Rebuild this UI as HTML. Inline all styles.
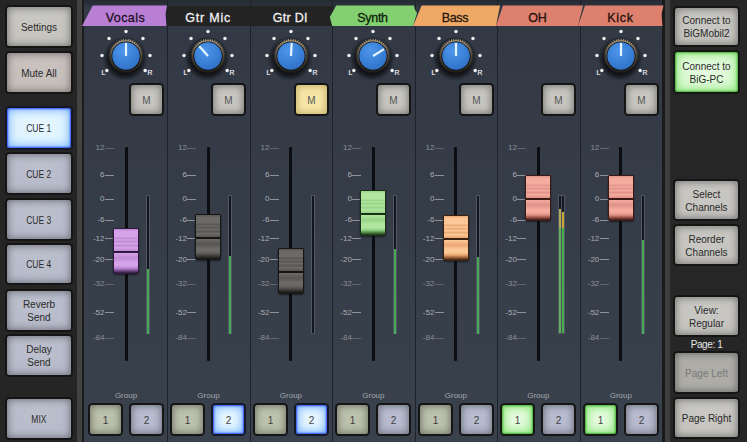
<!DOCTYPE html><html><head><meta charset="utf-8"><style>
*{margin:0;padding:0;box-sizing:border-box}
html,body{width:747px;height:442px;overflow:hidden;background:#252525;font-family:"Liberation Sans",sans-serif}
.a{position:absolute}
.btn{position:absolute;border-radius:2.5px;box-shadow:0 0 0 2px #151515, inset 0 0 7px 1px rgba(0,0,0,.38);display:flex;align-items:center;justify-content:center;text-align:center;color:#2a2a2a;font-size:10px;line-height:13px;padding-top:1px}
.gray{background:radial-gradient(ellipse 75% 65% at 50% 40%,rgba(255,255,255,.12),rgba(255,255,255,0)) #c2c1bc}
.pink{background:radial-gradient(ellipse 75% 65% at 50% 40%,rgba(255,255,255,.1),rgba(255,255,255,0)) #c3bcb9}
.blue{background:radial-gradient(ellipse 75% 65% at 50% 40%,rgba(255,255,255,.12),rgba(255,255,255,0)) #b4b8c7}
.cue{background:radial-gradient(ellipse 80% 70% at 50% 45%,rgba(255,255,255,.5),rgba(255,255,255,0)) #d4f0ff;box-shadow:0 0 0 2px #141828, inset 0 0 2px 1px rgba(40,70,240,.95), inset 0 0 8px 2px rgba(80,150,255,.7)}
.grn{background:radial-gradient(ellipse 80% 70% at 50% 45%,rgba(255,255,255,.45),rgba(255,255,255,0)) #d2f8c8;box-shadow:0 0 0 2px #151815, inset 0 0 2px 1px rgba(60,170,40,.9), inset 0 0 8px 2px rgba(110,220,90,.75)}
.dis{background:#adaca7;color:#7b7b78}
.mbtn{background:radial-gradient(ellipse 75% 65% at 50% 40%,rgba(255,255,255,.1),rgba(255,255,255,0)) #c2c1bb;color:#555}
.ybtn{background:#f5e6a8;color:#555;box-shadow:0 0 0 2px #151515, inset 0 0 7px 1px rgba(120,90,0,.4)!important}
.g1{background:radial-gradient(ellipse 75% 65% at 50% 40%,rgba(255,255,255,.1),rgba(255,255,255,0)) #b6bca6;color:#3c3c3c}
.g2{background:radial-gradient(ellipse 75% 65% at 50% 40%,rgba(255,255,255,.1),rgba(255,255,255,0)) #b2b6ca;color:#3c3c3c}
.g1s{background:radial-gradient(ellipse 80% 70% at 50% 45%,rgba(255,255,255,.45),rgba(255,255,255,0)) #d2f8c8;color:#444;box-shadow:0 0 0 2px #151815, inset 0 0 2px 1px rgba(60,170,40,.9), inset 0 0 8px 2px rgba(110,220,90,.75)}
.g2s{background:radial-gradient(ellipse 80% 70% at 50% 45%,rgba(255,255,255,.5),rgba(255,255,255,0)) #d4f0ff;color:#444;box-shadow:0 0 0 2px #141828, inset 0 0 2px 1px rgba(40,70,240,.95), inset 0 0 8px 2px rgba(80,150,255,.7)}
.lbl{position:absolute;font-size:8px;color:#a9aeb6;text-align:right;width:20.5px;line-height:8px}
.tick{position:absolute;height:1px;background:#8d939c;width:9px}
.tag{position:absolute;top:7.5px;height:21px;font-weight:normal;-webkit-text-stroke:.3px currentColor;font-size:12.5px;line-height:21px;text-align:center}
</style></head><body>

<div class="a" style="left:0;top:0;width:76px;height:442px;background:#252525"></div>
<div class="a" style="left:76px;top:0;width:6px;height:442px;background:#42423f;border-left:1px solid #232323"></div>
<div class="a" style="left:82px;top:0;width:2px;height:442px;background:#1a1c20"></div>
<div class="a" style="left:84px;top:0;width:578px;height:442px;background:linear-gradient(#323945,#39414d)"></div>
<div class="a" style="left:662px;top:0;width:3px;height:442px;background:#1a1a1a"></div>
<div class="a" style="left:665px;top:0;width:5px;height:442px;background:#3e3e3c"></div>
<div class="a" style="left:670px;top:0;width:77px;height:442px;background:#262626"></div>
<div class="btn gray" style="left:7px;top:7px;width:64px;height:39px;">Settings</div>
<div class="btn pink" style="left:7px;top:53px;width:64px;height:39px;">Mute All</div>
<div class="btn cue" style="left:7px;top:108px;width:64px;height:40px;"><span style="display:inline-block;transform:scaleX(.85)">CUE 1</span></div>
<div class="btn blue" style="left:7px;top:154px;width:64px;height:39px;"><span style="display:inline-block;transform:scaleX(.85)">CUE 2</span></div>
<div class="btn blue" style="left:7px;top:200px;width:64px;height:39px;"><span style="display:inline-block;transform:scaleX(.85)">CUE 3</span></div>
<div class="btn blue" style="left:7px;top:245px;width:64px;height:38px;"><span style="display:inline-block;transform:scaleX(.85)">CUE 4</span></div>
<div class="btn blue" style="left:7px;top:291px;width:64px;height:39px;">Reverb<br>Send</div>
<div class="btn blue" style="left:7px;top:336px;width:64px;height:39px;">Delay<br>Send</div>
<div class="btn blue" style="left:7px;top:399px;width:64px;height:39px;"><span style="display:inline-block;transform:scaleX(.85)">MIX</span></div>
<div class="btn gray" style="left:675px;top:8px;width:63px;height:37px;">Connect to<br>BiGMobil2</div>
<div class="btn grn" style="left:675px;top:52px;width:63px;height:40px;">Connect to<br>BiG-PC</div>
<div class="btn gray" style="left:675px;top:181px;width:63px;height:38px;">Select<br>Channels</div>
<div class="btn gray" style="left:675px;top:226px;width:63px;height:38px;">Reorder<br>Channels</div>
<div class="btn gray" style="left:675px;top:297px;width:63px;height:38px;">View:<br>Regular</div>
<div class="a" style="left:668px;top:337.5px;width:77px;text-align:center;color:#e6e6e6;font-size:10px;letter-spacing:-.4px;line-height:13px">Page: 1</div>
<div class="btn dis" style="left:675px;top:353px;width:63px;height:39px;">Page Left</div>
<div class="btn gray" style="left:675px;top:399px;width:63px;height:38px;">Page Right</div>
<div class="a" style="left:84px;top:0;width:578px;height:6px;background:linear-gradient(#262b33,#2c323c)"></div>
<div class="a" style="left:166px;top:5.5px;width:168px;height:20.5px;background:#232323"></div>
<div class="a" style="left:167px;top:0;width:1px;height:442px;background:#1e232b"></div>
<div class="a" style="left:250px;top:0;width:1px;height:442px;background:#1e232b"></div>
<div class="a" style="left:332px;top:0;width:1px;height:442px;background:#1e232b"></div>
<div class="a" style="left:415px;top:0;width:1px;height:442px;background:#1e232b"></div>
<div class="a" style="left:497px;top:0;width:1px;height:442px;background:#1e232b"></div>
<div class="a" style="left:580px;top:0;width:1px;height:442px;background:#1e232b"></div>
<svg class="a" style="left:0;top:0" width="747" height="30"><polygon points="82,26 92.7,5.5 167,5.5 165.5,14 166.5,26" fill="#b97fd5"/></svg>
<div class="tag" style="left:84.0px;width:82.47px;color:#1c1024;letter-spacing:0.4px;text-indent:0.4px">Vocals</div>
<svg class="a" style="left:96.0px;top:25.5px" width="60" height="60" viewBox="-30 -30 60 60"><defs><radialGradient id="kb0" cx="40%" cy="30%" r="75%"><stop offset="0" stop-color="#4e96ea"/><stop offset=".55" stop-color="#3b82d9"/><stop offset="1" stop-color="#3070c4"/></radialGradient><radialGradient id="ks0"><stop offset=".7" stop-color="#000" stop-opacity=".7"/><stop offset="1" stop-color="#000" stop-opacity="0"/></radialGradient><linearGradient id="kt0" x1="0" y1="0" x2="0" y2="1"><stop offset="0" stop-color="#b0a088"/><stop offset=".5" stop-color="#524a40"/><stop offset="1" stop-color="#1c1c1c"/></linearGradient></defs><circle r="22.5" cx="-0.8" cy="2.5" fill="url(#ks0)"/><circle r="16.2" fill="#1a1816"/><polygon points="0.00,-17.60 1.10,-15.36 2.50,-17.42 3.27,-15.05 4.96,-16.89 5.38,-14.43 7.31,-16.01 7.38,-13.52 9.52,-14.81 9.23,-12.33 11.53,-13.30 10.89,-10.89 13.30,-11.53 12.33,-9.23 14.81,-9.52 13.52,-7.38 16.01,-7.31 14.43,-5.38 16.89,-4.96 15.05,-3.27 17.42,-2.50 15.36,-1.10 17.60,-0.00 15.36,1.10 17.42,2.50 15.05,3.27 16.89,4.96 14.43,5.38 16.01,7.31 13.52,7.38 14.81,9.52 12.33,9.23 13.30,11.53 10.89,10.89 11.53,13.30 9.23,12.33 9.52,14.81 7.38,13.52 7.31,16.01 5.38,14.43 4.96,16.89 3.27,15.05 2.50,17.42 1.10,15.36 0.00,17.60 -1.10,15.36 -2.50,17.42 -3.27,15.05 -4.96,16.89 -5.38,14.43 -7.31,16.01 -7.38,13.52 -9.52,14.81 -9.23,12.33 -11.53,13.30 -10.89,10.89 -13.30,11.53 -12.33,9.23 -14.81,9.52 -13.52,7.38 -16.01,7.31 -14.43,5.38 -16.89,4.96 -15.05,3.27 -17.42,2.50 -15.36,1.10 -17.60,0.00 -15.36,-1.10 -17.42,-2.50 -15.05,-3.27 -16.89,-4.96 -14.43,-5.38 -16.01,-7.31 -13.52,-7.38 -14.81,-9.52 -12.33,-9.23 -13.30,-11.53 -10.89,-10.89 -11.53,-13.30 -9.23,-12.33 -9.52,-14.81 -7.38,-13.52 -7.31,-16.01 -5.38,-14.43 -4.96,-16.89 -3.27,-15.05 -2.50,-17.42 -1.10,-15.36" fill="url(#kt0)"/><circle r="14.5" fill="#0e0d0c"/><circle r="13.7" fill="url(#kb0)"/><line x1="0" y1="0" x2="0.00" y2="-13.00" stroke="#e4f4ff" stroke-width="2.2" stroke-linecap="butt"/><circle cx="-19.15" cy="14.46" r="1.7" fill="#f2f2f2"/><circle cx="-24.00" cy="-0.50" r="1.7" fill="#f2f2f2"/><circle cx="-16.97" cy="-17.47" r="1.7" fill="#f2f2f2"/><circle cx="0.00" cy="-24.50" r="1.7" fill="#f2f2f2"/><circle cx="16.97" cy="-17.47" r="1.7" fill="#f2f2f2"/><circle cx="24.00" cy="-0.50" r="1.7" fill="#f2f2f2"/><circle cx="19.15" cy="14.46" r="1.7" fill="#f2f2f2"/><text x="-24.5" y="18.5" font-size="6.8" fill="#f0f0f0" stroke="#f0f0f0" stroke-width=".2" font-family="Liberation Sans">L</text><text x="21.5" y="18.5" font-size="6.8" fill="#f0f0f0" stroke="#f0f0f0" stroke-width=".2" font-family="Liberation Sans">R</text></svg>
<div class="btn mbtn" style="left:131px;top:85px;width:31px;height:29px;">M</div>
<div class="lbl" style="left:84.0px;top:144px;color:#8a9098">12</div>
<div class="tick" style="left:105.0px;top:147.5px;background:#5f656e"></div>
<div class="lbl" style="left:84.0px;top:171px;">6</div>
<div class="tick" style="left:105.0px;top:174.5px;"></div>
<div class="lbl" style="left:84.0px;top:195px;">0</div>
<div class="tick" style="left:105.0px;top:198.5px;"></div>
<div class="lbl" style="left:84.0px;top:216px;">-6</div>
<div class="tick" style="left:105.0px;top:219.5px;"></div>
<div class="lbl" style="left:84.0px;top:234.5px;">-12</div>
<div class="tick" style="left:105.0px;top:238.0px;"></div>
<div class="lbl" style="left:84.0px;top:255.5px;">-20</div>
<div class="tick" style="left:105.0px;top:259.0px;"></div>
<div class="lbl" style="left:84.0px;top:280px;color:#8a9098">-32</div>
<div class="tick" style="left:105.0px;top:283.5px;background:#5f656e"></div>
<div class="lbl" style="left:84.0px;top:308.5px;">-52</div>
<div class="tick" style="left:105.0px;top:312.0px;"></div>
<div class="lbl" style="left:84.0px;top:334px;color:#8a9098">-84</div>
<div class="tick" style="left:105.0px;top:337.5px;background:#5f656e"></div>
<div class="a" style="left:124.5px;top:147px;width:3px;height:214px;background:#0c0d10;border-radius:1px"></div>
<div class="a" style="left:146.0px;top:195px;width:4px;height:139px;background:#12161e;border:1px solid #505765"></div>
<div class="a" style="left:147.0px;top:269px;width:2px;height:65px;background:#48a854"></div>
<div class="a" style="left:113.0px;top:228px;width:26px;height:46px;border-radius:1.5px 1.5px 3px 3px;background:#2e1a40;box-shadow:0 1px 2px rgba(0,0,0,.5)"></div>
<div class="a" style="left:114.0px;top:229px;width:24px;height:22px;background:linear-gradient(#be8ad4 0%,#d6a2e8 12%,#d6a2e8 36%,#be8ad4 42%,#d6a2e8 50%,#be8ad4 58%,#d6a2e8 66%,#be8ad4 76%,#d6a2e8 84%,#be8ad4 100%)"></div>
<div class="a" style="left:114.0px;top:253px;width:24px;height:17px;background:linear-gradient(#d6a2e8 0%,#be8ad4 30%,#d6a2e8 55%,#d6a2e8 72%,#be8ad4 88%,#8a5ca0 100%)"></div>
<div class="a" style="left:114.0px;top:270px;width:24px;height:3px;border-radius:0 0 2px 2px;background:linear-gradient(#8a5ca0,#2e1a40)"></div>
<div class="a" style="left:84.0px;top:391px;width:84px;text-align:center;font-size:8px;color:#a3a7ae;line-height:9px">Group</div>
<div class="btn g1" style="left:90px;top:405px;width:31px;height:29px;font-size:10px;">1</div>
<div class="btn g2" style="left:131px;top:405px;width:31px;height:29px;font-size:10px;">2</div>
<div class="tag" style="left:166.47px;width:82.47px;color:#f0f0f0;letter-spacing:0.8px;text-indent:0.8px">Gtr Mic</div>
<svg class="a" style="left:178.47px;top:25.5px" width="60" height="60" viewBox="-30 -30 60 60"><defs><radialGradient id="kb1" cx="40%" cy="30%" r="75%"><stop offset="0" stop-color="#4e96ea"/><stop offset=".55" stop-color="#3b82d9"/><stop offset="1" stop-color="#3070c4"/></radialGradient><radialGradient id="ks1"><stop offset=".7" stop-color="#000" stop-opacity=".7"/><stop offset="1" stop-color="#000" stop-opacity="0"/></radialGradient><linearGradient id="kt1" x1="0" y1="0" x2="0" y2="1"><stop offset="0" stop-color="#b0a088"/><stop offset=".5" stop-color="#524a40"/><stop offset="1" stop-color="#1c1c1c"/></linearGradient></defs><circle r="22.5" cx="-0.8" cy="2.5" fill="url(#ks1)"/><circle r="16.2" fill="#1a1816"/><polygon points="0.00,-17.60 1.10,-15.36 2.50,-17.42 3.27,-15.05 4.96,-16.89 5.38,-14.43 7.31,-16.01 7.38,-13.52 9.52,-14.81 9.23,-12.33 11.53,-13.30 10.89,-10.89 13.30,-11.53 12.33,-9.23 14.81,-9.52 13.52,-7.38 16.01,-7.31 14.43,-5.38 16.89,-4.96 15.05,-3.27 17.42,-2.50 15.36,-1.10 17.60,-0.00 15.36,1.10 17.42,2.50 15.05,3.27 16.89,4.96 14.43,5.38 16.01,7.31 13.52,7.38 14.81,9.52 12.33,9.23 13.30,11.53 10.89,10.89 11.53,13.30 9.23,12.33 9.52,14.81 7.38,13.52 7.31,16.01 5.38,14.43 4.96,16.89 3.27,15.05 2.50,17.42 1.10,15.36 0.00,17.60 -1.10,15.36 -2.50,17.42 -3.27,15.05 -4.96,16.89 -5.38,14.43 -7.31,16.01 -7.38,13.52 -9.52,14.81 -9.23,12.33 -11.53,13.30 -10.89,10.89 -13.30,11.53 -12.33,9.23 -14.81,9.52 -13.52,7.38 -16.01,7.31 -14.43,5.38 -16.89,4.96 -15.05,3.27 -17.42,2.50 -15.36,1.10 -17.60,0.00 -15.36,-1.10 -17.42,-2.50 -15.05,-3.27 -16.89,-4.96 -14.43,-5.38 -16.01,-7.31 -13.52,-7.38 -14.81,-9.52 -12.33,-9.23 -13.30,-11.53 -10.89,-10.89 -11.53,-13.30 -9.23,-12.33 -9.52,-14.81 -7.38,-13.52 -7.31,-16.01 -5.38,-14.43 -4.96,-16.89 -3.27,-15.05 -2.50,-17.42 -1.10,-15.36" fill="url(#kt1)"/><circle r="14.5" fill="#0e0d0c"/><circle r="13.7" fill="url(#kb1)"/><line x1="0" y1="0" x2="-8.70" y2="-9.66" stroke="#e4f4ff" stroke-width="2.2" stroke-linecap="butt"/><circle cx="-19.15" cy="14.46" r="1.7" fill="#f2f2f2"/><circle cx="-24.00" cy="-0.50" r="1.7" fill="#f2f2f2"/><circle cx="-16.97" cy="-17.47" r="1.7" fill="#f2f2f2"/><circle cx="0.00" cy="-24.50" r="1.7" fill="#f2f2f2"/><circle cx="16.97" cy="-17.47" r="1.7" fill="#f2f2f2"/><circle cx="24.00" cy="-0.50" r="1.7" fill="#f2f2f2"/><circle cx="19.15" cy="14.46" r="1.7" fill="#f2f2f2"/><text x="-24.5" y="18.5" font-size="6.8" fill="#f0f0f0" stroke="#f0f0f0" stroke-width=".2" font-family="Liberation Sans">L</text><text x="21.5" y="18.5" font-size="6.8" fill="#f0f0f0" stroke="#f0f0f0" stroke-width=".2" font-family="Liberation Sans">R</text></svg>
<div class="btn mbtn" style="left:213px;top:85px;width:31px;height:29px;">M</div>
<div class="lbl" style="left:166.47px;top:144px;color:#8a9098">12</div>
<div class="tick" style="left:187.47px;top:147.5px;background:#5f656e"></div>
<div class="lbl" style="left:166.47px;top:171px;">6</div>
<div class="tick" style="left:187.47px;top:174.5px;"></div>
<div class="lbl" style="left:166.47px;top:195px;">0</div>
<div class="tick" style="left:187.47px;top:198.5px;"></div>
<div class="lbl" style="left:166.47px;top:216px;">-6</div>
<div class="tick" style="left:187.47px;top:219.5px;"></div>
<div class="lbl" style="left:166.47px;top:234.5px;">-12</div>
<div class="tick" style="left:187.47px;top:238.0px;"></div>
<div class="lbl" style="left:166.47px;top:255.5px;">-20</div>
<div class="tick" style="left:187.47px;top:259.0px;"></div>
<div class="lbl" style="left:166.47px;top:280px;color:#8a9098">-32</div>
<div class="tick" style="left:187.47px;top:283.5px;background:#5f656e"></div>
<div class="lbl" style="left:166.47px;top:308.5px;">-52</div>
<div class="tick" style="left:187.47px;top:312.0px;"></div>
<div class="lbl" style="left:166.47px;top:334px;color:#8a9098">-84</div>
<div class="tick" style="left:187.47px;top:337.5px;background:#5f656e"></div>
<div class="a" style="left:206.97px;top:147px;width:3px;height:214px;background:#0c0d10;border-radius:1px"></div>
<div class="a" style="left:228.47px;top:195px;width:4px;height:139px;background:#12161e;border:1px solid #505765"></div>
<div class="a" style="left:229.47px;top:256px;width:2px;height:78px;background:#48a854"></div>
<div class="a" style="left:195.47px;top:214px;width:26px;height:46px;border-radius:1.5px 1.5px 3px 3px;background:#161514;box-shadow:0 1px 2px rgba(0,0,0,.5)"></div>
<div class="a" style="left:196.47px;top:215px;width:24px;height:22px;background:linear-gradient(#585652 0%,#6c6a66 12%,#6c6a66 36%,#585652 42%,#6c6a66 50%,#585652 58%,#6c6a66 66%,#585652 76%,#6c6a66 84%,#585652 100%)"></div>
<div class="a" style="left:196.47px;top:239px;width:24px;height:17px;background:linear-gradient(#6c6a66 0%,#585652 30%,#6c6a66 55%,#6c6a66 72%,#585652 88%,#3a3936 100%)"></div>
<div class="a" style="left:196.47px;top:256px;width:24px;height:3px;border-radius:0 0 2px 2px;background:linear-gradient(#3a3936,#161514)"></div>
<div class="a" style="left:166.47px;top:391px;width:84px;text-align:center;font-size:8px;color:#a3a7ae;line-height:9px">Group</div>
<div class="btn g1" style="left:172px;top:405px;width:31px;height:29px;font-size:10px;">1</div>
<div class="btn g2s" style="left:213px;top:405px;width:31px;height:29px;font-size:10px;">2</div>
<div class="tag" style="left:248.94px;width:82.47px;color:#f0f0f0;letter-spacing:0.3px;text-indent:0.3px">Gtr DI</div>
<svg class="a" style="left:260.94px;top:25.5px" width="60" height="60" viewBox="-30 -30 60 60"><defs><radialGradient id="kb2" cx="40%" cy="30%" r="75%"><stop offset="0" stop-color="#4e96ea"/><stop offset=".55" stop-color="#3b82d9"/><stop offset="1" stop-color="#3070c4"/></radialGradient><radialGradient id="ks2"><stop offset=".7" stop-color="#000" stop-opacity=".7"/><stop offset="1" stop-color="#000" stop-opacity="0"/></radialGradient><linearGradient id="kt2" x1="0" y1="0" x2="0" y2="1"><stop offset="0" stop-color="#b0a088"/><stop offset=".5" stop-color="#524a40"/><stop offset="1" stop-color="#1c1c1c"/></linearGradient></defs><circle r="22.5" cx="-0.8" cy="2.5" fill="url(#ks2)"/><circle r="16.2" fill="#1a1816"/><polygon points="0.00,-17.60 1.10,-15.36 2.50,-17.42 3.27,-15.05 4.96,-16.89 5.38,-14.43 7.31,-16.01 7.38,-13.52 9.52,-14.81 9.23,-12.33 11.53,-13.30 10.89,-10.89 13.30,-11.53 12.33,-9.23 14.81,-9.52 13.52,-7.38 16.01,-7.31 14.43,-5.38 16.89,-4.96 15.05,-3.27 17.42,-2.50 15.36,-1.10 17.60,-0.00 15.36,1.10 17.42,2.50 15.05,3.27 16.89,4.96 14.43,5.38 16.01,7.31 13.52,7.38 14.81,9.52 12.33,9.23 13.30,11.53 10.89,10.89 11.53,13.30 9.23,12.33 9.52,14.81 7.38,13.52 7.31,16.01 5.38,14.43 4.96,16.89 3.27,15.05 2.50,17.42 1.10,15.36 0.00,17.60 -1.10,15.36 -2.50,17.42 -3.27,15.05 -4.96,16.89 -5.38,14.43 -7.31,16.01 -7.38,13.52 -9.52,14.81 -9.23,12.33 -11.53,13.30 -10.89,10.89 -13.30,11.53 -12.33,9.23 -14.81,9.52 -13.52,7.38 -16.01,7.31 -14.43,5.38 -16.89,4.96 -15.05,3.27 -17.42,2.50 -15.36,1.10 -17.60,0.00 -15.36,-1.10 -17.42,-2.50 -15.05,-3.27 -16.89,-4.96 -14.43,-5.38 -16.01,-7.31 -13.52,-7.38 -14.81,-9.52 -12.33,-9.23 -13.30,-11.53 -10.89,-10.89 -11.53,-13.30 -9.23,-12.33 -9.52,-14.81 -7.38,-13.52 -7.31,-16.01 -5.38,-14.43 -4.96,-16.89 -3.27,-15.05 -2.50,-17.42 -1.10,-15.36" fill="url(#kt2)"/><circle r="14.5" fill="#0e0d0c"/><circle r="13.7" fill="url(#kb2)"/><line x1="0" y1="0" x2="0.68" y2="-12.98" stroke="#e4f4ff" stroke-width="2.2" stroke-linecap="butt"/><circle cx="-19.15" cy="14.46" r="1.7" fill="#f2f2f2"/><circle cx="-24.00" cy="-0.50" r="1.7" fill="#f2f2f2"/><circle cx="-16.97" cy="-17.47" r="1.7" fill="#f2f2f2"/><circle cx="0.00" cy="-24.50" r="1.7" fill="#f2f2f2"/><circle cx="16.97" cy="-17.47" r="1.7" fill="#f2f2f2"/><circle cx="24.00" cy="-0.50" r="1.7" fill="#f2f2f2"/><circle cx="19.15" cy="14.46" r="1.7" fill="#f2f2f2"/><text x="-24.5" y="18.5" font-size="6.8" fill="#f0f0f0" stroke="#f0f0f0" stroke-width=".2" font-family="Liberation Sans">L</text><text x="21.5" y="18.5" font-size="6.8" fill="#f0f0f0" stroke="#f0f0f0" stroke-width=".2" font-family="Liberation Sans">R</text></svg>
<div class="btn ybtn" style="left:296px;top:85px;width:31px;height:29px;">M</div>
<div class="lbl" style="left:248.94px;top:144px;color:#8a9098">12</div>
<div class="tick" style="left:269.94px;top:147.5px;background:#5f656e"></div>
<div class="lbl" style="left:248.94px;top:171px;">6</div>
<div class="tick" style="left:269.94px;top:174.5px;"></div>
<div class="lbl" style="left:248.94px;top:195px;">0</div>
<div class="tick" style="left:269.94px;top:198.5px;"></div>
<div class="lbl" style="left:248.94px;top:216px;">-6</div>
<div class="tick" style="left:269.94px;top:219.5px;"></div>
<div class="lbl" style="left:248.94px;top:234.5px;">-12</div>
<div class="tick" style="left:269.94px;top:238.0px;"></div>
<div class="lbl" style="left:248.94px;top:255.5px;">-20</div>
<div class="tick" style="left:269.94px;top:259.0px;"></div>
<div class="lbl" style="left:248.94px;top:280px;color:#8a9098">-32</div>
<div class="tick" style="left:269.94px;top:283.5px;background:#5f656e"></div>
<div class="lbl" style="left:248.94px;top:308.5px;">-52</div>
<div class="tick" style="left:269.94px;top:312.0px;"></div>
<div class="lbl" style="left:248.94px;top:334px;color:#8a9098">-84</div>
<div class="tick" style="left:269.94px;top:337.5px;background:#5f656e"></div>
<div class="a" style="left:289.44px;top:147px;width:3px;height:214px;background:#0c0d10;border-radius:1px"></div>
<div class="a" style="left:310.94px;top:195px;width:4px;height:139px;background:#12161e;border:1px solid #505765"></div>
<div class="a" style="left:277.94px;top:248px;width:26px;height:46px;border-radius:1.5px 1.5px 3px 3px;background:#161514;box-shadow:0 1px 2px rgba(0,0,0,.5)"></div>
<div class="a" style="left:278.94px;top:249px;width:24px;height:22px;background:linear-gradient(#585652 0%,#6c6a66 12%,#6c6a66 36%,#585652 42%,#6c6a66 50%,#585652 58%,#6c6a66 66%,#585652 76%,#6c6a66 84%,#585652 100%)"></div>
<div class="a" style="left:278.94px;top:273px;width:24px;height:17px;background:linear-gradient(#6c6a66 0%,#585652 30%,#6c6a66 55%,#6c6a66 72%,#585652 88%,#3a3936 100%)"></div>
<div class="a" style="left:278.94px;top:290px;width:24px;height:3px;border-radius:0 0 2px 2px;background:linear-gradient(#3a3936,#161514)"></div>
<div class="a" style="left:248.94px;top:391px;width:84px;text-align:center;font-size:8px;color:#a3a7ae;line-height:9px">Group</div>
<div class="btn g1" style="left:255px;top:405px;width:31px;height:29px;font-size:10px;">1</div>
<div class="btn g2s" style="left:296px;top:405px;width:31px;height:29px;font-size:10px;">2</div>
<svg class="a" style="left:0;top:0" width="747" height="30"><polygon points="336.3,5.5 414,5.5 414.6,9 417,13 413,26 332.2,26 329.8,17" fill="#82d06f"/></svg>
<div class="tag" style="left:331.40999999999997px;width:82.47px;color:#0f1f0c;letter-spacing:-0.3px;text-indent:-0.3px">Synth</div>
<svg class="a" style="left:343.40999999999997px;top:25.5px" width="60" height="60" viewBox="-30 -30 60 60"><defs><radialGradient id="kb3" cx="40%" cy="30%" r="75%"><stop offset="0" stop-color="#4e96ea"/><stop offset=".55" stop-color="#3b82d9"/><stop offset="1" stop-color="#3070c4"/></radialGradient><radialGradient id="ks3"><stop offset=".7" stop-color="#000" stop-opacity=".7"/><stop offset="1" stop-color="#000" stop-opacity="0"/></radialGradient><linearGradient id="kt3" x1="0" y1="0" x2="0" y2="1"><stop offset="0" stop-color="#b0a088"/><stop offset=".5" stop-color="#524a40"/><stop offset="1" stop-color="#1c1c1c"/></linearGradient></defs><circle r="22.5" cx="-0.8" cy="2.5" fill="url(#ks3)"/><circle r="16.2" fill="#1a1816"/><polygon points="0.00,-17.60 1.10,-15.36 2.50,-17.42 3.27,-15.05 4.96,-16.89 5.38,-14.43 7.31,-16.01 7.38,-13.52 9.52,-14.81 9.23,-12.33 11.53,-13.30 10.89,-10.89 13.30,-11.53 12.33,-9.23 14.81,-9.52 13.52,-7.38 16.01,-7.31 14.43,-5.38 16.89,-4.96 15.05,-3.27 17.42,-2.50 15.36,-1.10 17.60,-0.00 15.36,1.10 17.42,2.50 15.05,3.27 16.89,4.96 14.43,5.38 16.01,7.31 13.52,7.38 14.81,9.52 12.33,9.23 13.30,11.53 10.89,10.89 11.53,13.30 9.23,12.33 9.52,14.81 7.38,13.52 7.31,16.01 5.38,14.43 4.96,16.89 3.27,15.05 2.50,17.42 1.10,15.36 0.00,17.60 -1.10,15.36 -2.50,17.42 -3.27,15.05 -4.96,16.89 -5.38,14.43 -7.31,16.01 -7.38,13.52 -9.52,14.81 -9.23,12.33 -11.53,13.30 -10.89,10.89 -13.30,11.53 -12.33,9.23 -14.81,9.52 -13.52,7.38 -16.01,7.31 -14.43,5.38 -16.89,4.96 -15.05,3.27 -17.42,2.50 -15.36,1.10 -17.60,0.00 -15.36,-1.10 -17.42,-2.50 -15.05,-3.27 -16.89,-4.96 -14.43,-5.38 -16.01,-7.31 -13.52,-7.38 -14.81,-9.52 -12.33,-9.23 -13.30,-11.53 -10.89,-10.89 -11.53,-13.30 -9.23,-12.33 -9.52,-14.81 -7.38,-13.52 -7.31,-16.01 -5.38,-14.43 -4.96,-16.89 -3.27,-15.05 -2.50,-17.42 -1.10,-15.36" fill="url(#kt3)"/><circle r="14.5" fill="#0e0d0c"/><circle r="13.7" fill="url(#kb3)"/><line x1="0" y1="0" x2="11.02" y2="-6.89" stroke="#e4f4ff" stroke-width="2.2" stroke-linecap="butt"/><circle cx="-19.15" cy="14.46" r="1.7" fill="#f2f2f2"/><circle cx="-24.00" cy="-0.50" r="1.7" fill="#f2f2f2"/><circle cx="-16.97" cy="-17.47" r="1.7" fill="#f2f2f2"/><circle cx="0.00" cy="-24.50" r="1.7" fill="#f2f2f2"/><circle cx="16.97" cy="-17.47" r="1.7" fill="#f2f2f2"/><circle cx="24.00" cy="-0.50" r="1.7" fill="#f2f2f2"/><circle cx="19.15" cy="14.46" r="1.7" fill="#f2f2f2"/><text x="-24.5" y="18.5" font-size="6.8" fill="#f0f0f0" stroke="#f0f0f0" stroke-width=".2" font-family="Liberation Sans">L</text><text x="21.5" y="18.5" font-size="6.8" fill="#f0f0f0" stroke="#f0f0f0" stroke-width=".2" font-family="Liberation Sans">R</text></svg>
<div class="btn mbtn" style="left:378px;top:85px;width:31px;height:29px;">M</div>
<div class="lbl" style="left:331.40999999999997px;top:144px;color:#8a9098">12</div>
<div class="tick" style="left:352.40999999999997px;top:147.5px;background:#5f656e"></div>
<div class="lbl" style="left:331.40999999999997px;top:171px;">6</div>
<div class="tick" style="left:352.40999999999997px;top:174.5px;"></div>
<div class="lbl" style="left:331.40999999999997px;top:195px;">0</div>
<div class="tick" style="left:352.40999999999997px;top:198.5px;"></div>
<div class="lbl" style="left:331.40999999999997px;top:216px;">-6</div>
<div class="tick" style="left:352.40999999999997px;top:219.5px;"></div>
<div class="lbl" style="left:331.40999999999997px;top:234.5px;">-12</div>
<div class="tick" style="left:352.40999999999997px;top:238.0px;"></div>
<div class="lbl" style="left:331.40999999999997px;top:255.5px;">-20</div>
<div class="tick" style="left:352.40999999999997px;top:259.0px;"></div>
<div class="lbl" style="left:331.40999999999997px;top:280px;color:#8a9098">-32</div>
<div class="tick" style="left:352.40999999999997px;top:283.5px;background:#5f656e"></div>
<div class="lbl" style="left:331.40999999999997px;top:308.5px;">-52</div>
<div class="tick" style="left:352.40999999999997px;top:312.0px;"></div>
<div class="lbl" style="left:331.40999999999997px;top:334px;color:#8a9098">-84</div>
<div class="tick" style="left:352.40999999999997px;top:337.5px;background:#5f656e"></div>
<div class="a" style="left:371.90999999999997px;top:147px;width:3px;height:214px;background:#0c0d10;border-radius:1px"></div>
<div class="a" style="left:393.40999999999997px;top:195px;width:4px;height:139px;background:#12161e;border:1px solid #505765"></div>
<div class="a" style="left:394.40999999999997px;top:249px;width:2px;height:85px;background:#48a854"></div>
<div class="a" style="left:360.40999999999997px;top:190px;width:26px;height:46px;border-radius:1.5px 1.5px 3px 3px;background:#1a3016;box-shadow:0 1px 2px rgba(0,0,0,.5)"></div>
<div class="a" style="left:361.40999999999997px;top:191px;width:24px;height:22px;background:linear-gradient(#96d486 0%,#b2e6a0 12%,#b2e6a0 36%,#96d486 42%,#b2e6a0 50%,#96d486 58%,#b2e6a0 66%,#96d486 76%,#b2e6a0 84%,#96d486 100%)"></div>
<div class="a" style="left:361.40999999999997px;top:215px;width:24px;height:17px;background:linear-gradient(#b2e6a0 0%,#96d486 30%,#b2e6a0 55%,#b2e6a0 72%,#96d486 88%,#5e9a50 100%)"></div>
<div class="a" style="left:361.40999999999997px;top:232px;width:24px;height:3px;border-radius:0 0 2px 2px;background:linear-gradient(#5e9a50,#1a3016)"></div>
<div class="a" style="left:331.40999999999997px;top:391px;width:84px;text-align:center;font-size:8px;color:#a3a7ae;line-height:9px">Group</div>
<div class="btn g1" style="left:337px;top:405px;width:31px;height:29px;font-size:10px;">1</div>
<div class="btn g2" style="left:378px;top:405px;width:31px;height:29px;font-size:10px;">2</div>
<svg class="a" style="left:0;top:0" width="747" height="30"><polygon points="413,26 421.7,5.5 500,5.5 496,26" fill="#f0a866"/></svg>
<div class="tag" style="left:413.88px;width:82.47px;color:#24150a;letter-spacing:-0.4px;text-indent:-0.4px">Bass</div>
<svg class="a" style="left:425.88px;top:25.5px" width="60" height="60" viewBox="-30 -30 60 60"><defs><radialGradient id="kb4" cx="40%" cy="30%" r="75%"><stop offset="0" stop-color="#4e96ea"/><stop offset=".55" stop-color="#3b82d9"/><stop offset="1" stop-color="#3070c4"/></radialGradient><radialGradient id="ks4"><stop offset=".7" stop-color="#000" stop-opacity=".7"/><stop offset="1" stop-color="#000" stop-opacity="0"/></radialGradient><linearGradient id="kt4" x1="0" y1="0" x2="0" y2="1"><stop offset="0" stop-color="#b0a088"/><stop offset=".5" stop-color="#524a40"/><stop offset="1" stop-color="#1c1c1c"/></linearGradient></defs><circle r="22.5" cx="-0.8" cy="2.5" fill="url(#ks4)"/><circle r="16.2" fill="#1a1816"/><polygon points="0.00,-17.60 1.10,-15.36 2.50,-17.42 3.27,-15.05 4.96,-16.89 5.38,-14.43 7.31,-16.01 7.38,-13.52 9.52,-14.81 9.23,-12.33 11.53,-13.30 10.89,-10.89 13.30,-11.53 12.33,-9.23 14.81,-9.52 13.52,-7.38 16.01,-7.31 14.43,-5.38 16.89,-4.96 15.05,-3.27 17.42,-2.50 15.36,-1.10 17.60,-0.00 15.36,1.10 17.42,2.50 15.05,3.27 16.89,4.96 14.43,5.38 16.01,7.31 13.52,7.38 14.81,9.52 12.33,9.23 13.30,11.53 10.89,10.89 11.53,13.30 9.23,12.33 9.52,14.81 7.38,13.52 7.31,16.01 5.38,14.43 4.96,16.89 3.27,15.05 2.50,17.42 1.10,15.36 0.00,17.60 -1.10,15.36 -2.50,17.42 -3.27,15.05 -4.96,16.89 -5.38,14.43 -7.31,16.01 -7.38,13.52 -9.52,14.81 -9.23,12.33 -11.53,13.30 -10.89,10.89 -13.30,11.53 -12.33,9.23 -14.81,9.52 -13.52,7.38 -16.01,7.31 -14.43,5.38 -16.89,4.96 -15.05,3.27 -17.42,2.50 -15.36,1.10 -17.60,0.00 -15.36,-1.10 -17.42,-2.50 -15.05,-3.27 -16.89,-4.96 -14.43,-5.38 -16.01,-7.31 -13.52,-7.38 -14.81,-9.52 -12.33,-9.23 -13.30,-11.53 -10.89,-10.89 -11.53,-13.30 -9.23,-12.33 -9.52,-14.81 -7.38,-13.52 -7.31,-16.01 -5.38,-14.43 -4.96,-16.89 -3.27,-15.05 -2.50,-17.42 -1.10,-15.36" fill="url(#kt4)"/><circle r="14.5" fill="#0e0d0c"/><circle r="13.7" fill="url(#kb4)"/><line x1="0" y1="0" x2="0.00" y2="-13.00" stroke="#e4f4ff" stroke-width="2.2" stroke-linecap="butt"/><circle cx="-19.15" cy="14.46" r="1.7" fill="#f2f2f2"/><circle cx="-24.00" cy="-0.50" r="1.7" fill="#f2f2f2"/><circle cx="-16.97" cy="-17.47" r="1.7" fill="#f2f2f2"/><circle cx="0.00" cy="-24.50" r="1.7" fill="#f2f2f2"/><circle cx="16.97" cy="-17.47" r="1.7" fill="#f2f2f2"/><circle cx="24.00" cy="-0.50" r="1.7" fill="#f2f2f2"/><circle cx="19.15" cy="14.46" r="1.7" fill="#f2f2f2"/><text x="-24.5" y="18.5" font-size="6.8" fill="#f0f0f0" stroke="#f0f0f0" stroke-width=".2" font-family="Liberation Sans">L</text><text x="21.5" y="18.5" font-size="6.8" fill="#f0f0f0" stroke="#f0f0f0" stroke-width=".2" font-family="Liberation Sans">R</text></svg>
<div class="btn mbtn" style="left:461px;top:85px;width:31px;height:29px;">M</div>
<div class="lbl" style="left:413.88px;top:144px;color:#8a9098">12</div>
<div class="tick" style="left:434.88px;top:147.5px;background:#5f656e"></div>
<div class="lbl" style="left:413.88px;top:171px;">6</div>
<div class="tick" style="left:434.88px;top:174.5px;"></div>
<div class="lbl" style="left:413.88px;top:195px;">0</div>
<div class="tick" style="left:434.88px;top:198.5px;"></div>
<div class="lbl" style="left:413.88px;top:216px;">-6</div>
<div class="tick" style="left:434.88px;top:219.5px;"></div>
<div class="lbl" style="left:413.88px;top:234.5px;">-12</div>
<div class="tick" style="left:434.88px;top:238.0px;"></div>
<div class="lbl" style="left:413.88px;top:255.5px;">-20</div>
<div class="tick" style="left:434.88px;top:259.0px;"></div>
<div class="lbl" style="left:413.88px;top:280px;color:#8a9098">-32</div>
<div class="tick" style="left:434.88px;top:283.5px;background:#5f656e"></div>
<div class="lbl" style="left:413.88px;top:308.5px;">-52</div>
<div class="tick" style="left:434.88px;top:312.0px;"></div>
<div class="lbl" style="left:413.88px;top:334px;color:#8a9098">-84</div>
<div class="tick" style="left:434.88px;top:337.5px;background:#5f656e"></div>
<div class="a" style="left:454.38px;top:147px;width:3px;height:214px;background:#0c0d10;border-radius:1px"></div>
<div class="a" style="left:475.88px;top:195px;width:4px;height:139px;background:#12161e;border:1px solid #505765"></div>
<div class="a" style="left:476.88px;top:257px;width:2px;height:77px;background:#48a854"></div>
<div class="a" style="left:442.88px;top:215px;width:26px;height:46px;border-radius:1.5px 1.5px 3px 3px;background:#3a2010;box-shadow:0 1px 2px rgba(0,0,0,.5)"></div>
<div class="a" style="left:443.88px;top:216px;width:24px;height:22px;background:linear-gradient(#eaa872 0%,#fcc898 12%,#fcc898 36%,#eaa872 42%,#fcc898 50%,#eaa872 58%,#fcc898 66%,#eaa872 76%,#fcc898 84%,#eaa872 100%)"></div>
<div class="a" style="left:443.88px;top:240px;width:24px;height:17px;background:linear-gradient(#fcc898 0%,#eaa872 30%,#fcc898 55%,#fcc898 72%,#eaa872 88%,#b07040 100%)"></div>
<div class="a" style="left:443.88px;top:257px;width:24px;height:3px;border-radius:0 0 2px 2px;background:linear-gradient(#b07040,#3a2010)"></div>
<div class="a" style="left:413.88px;top:391px;width:84px;text-align:center;font-size:8px;color:#a3a7ae;line-height:9px">Group</div>
<div class="btn g1" style="left:420px;top:405px;width:31px;height:29px;font-size:10px;">1</div>
<div class="btn g2" style="left:461px;top:405px;width:31px;height:29px;font-size:10px;">2</div>
<svg class="a" style="left:0;top:0" width="747" height="30"><polygon points="496,26 503,5.5 583,5.5 578,26" fill="#dd806e"/></svg>
<div class="tag" style="left:496.35px;width:82.47px;color:#24100c;letter-spacing:-0.3px;text-indent:-0.3px">OH</div>
<div class="btn mbtn" style="left:543px;top:85px;width:31px;height:29px;">M</div>
<div class="lbl" style="left:496.35px;top:144px;color:#8a9098">12</div>
<div class="tick" style="left:517.35px;top:147.5px;background:#5f656e"></div>
<div class="lbl" style="left:496.35px;top:171px;">6</div>
<div class="tick" style="left:517.35px;top:174.5px;"></div>
<div class="lbl" style="left:496.35px;top:195px;">0</div>
<div class="tick" style="left:517.35px;top:198.5px;"></div>
<div class="lbl" style="left:496.35px;top:216px;">-6</div>
<div class="tick" style="left:517.35px;top:219.5px;"></div>
<div class="lbl" style="left:496.35px;top:234.5px;">-12</div>
<div class="tick" style="left:517.35px;top:238.0px;"></div>
<div class="lbl" style="left:496.35px;top:255.5px;">-20</div>
<div class="tick" style="left:517.35px;top:259.0px;"></div>
<div class="lbl" style="left:496.35px;top:280px;color:#8a9098">-32</div>
<div class="tick" style="left:517.35px;top:283.5px;background:#5f656e"></div>
<div class="lbl" style="left:496.35px;top:308.5px;">-52</div>
<div class="tick" style="left:517.35px;top:312.0px;"></div>
<div class="lbl" style="left:496.35px;top:334px;color:#8a9098">-84</div>
<div class="tick" style="left:517.35px;top:337.5px;background:#5f656e"></div>
<div class="a" style="left:536.85px;top:147px;width:3px;height:214px;background:#0c0d10;border-radius:1px"></div>
<div class="a" style="left:558.35px;top:195px;width:7px;height:139px;background:#12161e;border:1px solid #505765"></div>
<div class="a" style="left:561.35px;top:196px;width:1px;height:137px;background:#4a505c"></div>
<div class="a" style="left:559.35px;top:209px;width:2px;height:19px;background:#b4aa58"></div>
<div class="a" style="left:562.35px;top:212px;width:2px;height:16px;background:#c9a834"></div>
<div class="a" style="left:559.35px;top:228px;width:2px;height:105px;background:#62ae58"></div>
<div class="a" style="left:562.35px;top:228px;width:2px;height:105px;background:#46b04a"></div>
<div class="a" style="left:525.35px;top:175px;width:26px;height:46px;border-radius:1.5px 1.5px 3px 3px;background:#3a1a14;box-shadow:0 1px 2px rgba(0,0,0,.5)"></div>
<div class="a" style="left:526.35px;top:176px;width:24px;height:22px;background:linear-gradient(#e0928a 0%,#f4ac9e 12%,#f4ac9e 36%,#e0928a 42%,#f4ac9e 50%,#e0928a 58%,#f4ac9e 66%,#e0928a 76%,#f4ac9e 84%,#e0928a 100%)"></div>
<div class="a" style="left:526.35px;top:200px;width:24px;height:17px;background:linear-gradient(#f4ac9e 0%,#e0928a 30%,#f4ac9e 55%,#f4ac9e 72%,#e0928a 88%,#a85a50 100%)"></div>
<div class="a" style="left:526.35px;top:217px;width:24px;height:3px;border-radius:0 0 2px 2px;background:linear-gradient(#a85a50,#3a1a14)"></div>
<div class="a" style="left:496.35px;top:391px;width:84px;text-align:center;font-size:8px;color:#a3a7ae;line-height:9px">Group</div>
<div class="btn g1s" style="left:502px;top:405px;width:31px;height:29px;font-size:10px;">1</div>
<div class="btn g2" style="left:543px;top:405px;width:31px;height:29px;font-size:10px;">2</div>
<svg class="a" style="left:0;top:0" width="747" height="30"><polygon points="578,26 585,5.5 663.5,5.5 661.5,14 662.5,26" fill="#dd806e"/></svg>
<div class="tag" style="left:578.8199999999999px;width:82.47px;color:#24100c;letter-spacing:0.7px;text-indent:0.7px">Kick</div>
<svg class="a" style="left:590.8199999999999px;top:25.5px" width="60" height="60" viewBox="-30 -30 60 60"><defs><radialGradient id="kb6" cx="40%" cy="30%" r="75%"><stop offset="0" stop-color="#4e96ea"/><stop offset=".55" stop-color="#3b82d9"/><stop offset="1" stop-color="#3070c4"/></radialGradient><radialGradient id="ks6"><stop offset=".7" stop-color="#000" stop-opacity=".7"/><stop offset="1" stop-color="#000" stop-opacity="0"/></radialGradient><linearGradient id="kt6" x1="0" y1="0" x2="0" y2="1"><stop offset="0" stop-color="#b0a088"/><stop offset=".5" stop-color="#524a40"/><stop offset="1" stop-color="#1c1c1c"/></linearGradient></defs><circle r="22.5" cx="-0.8" cy="2.5" fill="url(#ks6)"/><circle r="16.2" fill="#1a1816"/><polygon points="0.00,-17.60 1.10,-15.36 2.50,-17.42 3.27,-15.05 4.96,-16.89 5.38,-14.43 7.31,-16.01 7.38,-13.52 9.52,-14.81 9.23,-12.33 11.53,-13.30 10.89,-10.89 13.30,-11.53 12.33,-9.23 14.81,-9.52 13.52,-7.38 16.01,-7.31 14.43,-5.38 16.89,-4.96 15.05,-3.27 17.42,-2.50 15.36,-1.10 17.60,-0.00 15.36,1.10 17.42,2.50 15.05,3.27 16.89,4.96 14.43,5.38 16.01,7.31 13.52,7.38 14.81,9.52 12.33,9.23 13.30,11.53 10.89,10.89 11.53,13.30 9.23,12.33 9.52,14.81 7.38,13.52 7.31,16.01 5.38,14.43 4.96,16.89 3.27,15.05 2.50,17.42 1.10,15.36 0.00,17.60 -1.10,15.36 -2.50,17.42 -3.27,15.05 -4.96,16.89 -5.38,14.43 -7.31,16.01 -7.38,13.52 -9.52,14.81 -9.23,12.33 -11.53,13.30 -10.89,10.89 -13.30,11.53 -12.33,9.23 -14.81,9.52 -13.52,7.38 -16.01,7.31 -14.43,5.38 -16.89,4.96 -15.05,3.27 -17.42,2.50 -15.36,1.10 -17.60,0.00 -15.36,-1.10 -17.42,-2.50 -15.05,-3.27 -16.89,-4.96 -14.43,-5.38 -16.01,-7.31 -13.52,-7.38 -14.81,-9.52 -12.33,-9.23 -13.30,-11.53 -10.89,-10.89 -11.53,-13.30 -9.23,-12.33 -9.52,-14.81 -7.38,-13.52 -7.31,-16.01 -5.38,-14.43 -4.96,-16.89 -3.27,-15.05 -2.50,-17.42 -1.10,-15.36" fill="url(#kt6)"/><circle r="14.5" fill="#0e0d0c"/><circle r="13.7" fill="url(#kb6)"/><line x1="0" y1="0" x2="0.00" y2="-13.00" stroke="#e4f4ff" stroke-width="2.2" stroke-linecap="butt"/><circle cx="-19.15" cy="14.46" r="1.7" fill="#f2f2f2"/><circle cx="-24.00" cy="-0.50" r="1.7" fill="#f2f2f2"/><circle cx="-16.97" cy="-17.47" r="1.7" fill="#f2f2f2"/><circle cx="0.00" cy="-24.50" r="1.7" fill="#f2f2f2"/><circle cx="16.97" cy="-17.47" r="1.7" fill="#f2f2f2"/><circle cx="24.00" cy="-0.50" r="1.7" fill="#f2f2f2"/><circle cx="19.15" cy="14.46" r="1.7" fill="#f2f2f2"/><text x="-24.5" y="18.5" font-size="6.8" fill="#f0f0f0" stroke="#f0f0f0" stroke-width=".2" font-family="Liberation Sans">L</text><text x="21.5" y="18.5" font-size="6.8" fill="#f0f0f0" stroke="#f0f0f0" stroke-width=".2" font-family="Liberation Sans">R</text></svg>
<div class="btn mbtn" style="left:626px;top:85px;width:31px;height:29px;">M</div>
<div class="lbl" style="left:578.8199999999999px;top:144px;color:#8a9098">12</div>
<div class="tick" style="left:599.8199999999999px;top:147.5px;background:#5f656e"></div>
<div class="lbl" style="left:578.8199999999999px;top:171px;">6</div>
<div class="tick" style="left:599.8199999999999px;top:174.5px;"></div>
<div class="lbl" style="left:578.8199999999999px;top:195px;">0</div>
<div class="tick" style="left:599.8199999999999px;top:198.5px;"></div>
<div class="lbl" style="left:578.8199999999999px;top:216px;">-6</div>
<div class="tick" style="left:599.8199999999999px;top:219.5px;"></div>
<div class="lbl" style="left:578.8199999999999px;top:234.5px;">-12</div>
<div class="tick" style="left:599.8199999999999px;top:238.0px;"></div>
<div class="lbl" style="left:578.8199999999999px;top:255.5px;">-20</div>
<div class="tick" style="left:599.8199999999999px;top:259.0px;"></div>
<div class="lbl" style="left:578.8199999999999px;top:280px;color:#8a9098">-32</div>
<div class="tick" style="left:599.8199999999999px;top:283.5px;background:#5f656e"></div>
<div class="lbl" style="left:578.8199999999999px;top:308.5px;">-52</div>
<div class="tick" style="left:599.8199999999999px;top:312.0px;"></div>
<div class="lbl" style="left:578.8199999999999px;top:334px;color:#8a9098">-84</div>
<div class="tick" style="left:599.8199999999999px;top:337.5px;background:#5f656e"></div>
<div class="a" style="left:619.3199999999999px;top:147px;width:3px;height:214px;background:#0c0d10;border-radius:1px"></div>
<div class="a" style="left:640.8199999999999px;top:195px;width:4px;height:139px;background:#12161e;border:1px solid #505765"></div>
<div class="a" style="left:641.8199999999999px;top:240px;width:2px;height:94px;background:#48a854"></div>
<div class="a" style="left:607.8199999999999px;top:175px;width:26px;height:46px;border-radius:1.5px 1.5px 3px 3px;background:#3a1a14;box-shadow:0 1px 2px rgba(0,0,0,.5)"></div>
<div class="a" style="left:608.8199999999999px;top:176px;width:24px;height:22px;background:linear-gradient(#e0928a 0%,#f4ac9e 12%,#f4ac9e 36%,#e0928a 42%,#f4ac9e 50%,#e0928a 58%,#f4ac9e 66%,#e0928a 76%,#f4ac9e 84%,#e0928a 100%)"></div>
<div class="a" style="left:608.8199999999999px;top:200px;width:24px;height:17px;background:linear-gradient(#f4ac9e 0%,#e0928a 30%,#f4ac9e 55%,#f4ac9e 72%,#e0928a 88%,#a85a50 100%)"></div>
<div class="a" style="left:608.8199999999999px;top:217px;width:24px;height:3px;border-radius:0 0 2px 2px;background:linear-gradient(#a85a50,#3a1a14)"></div>
<div class="a" style="left:578.8199999999999px;top:391px;width:84px;text-align:center;font-size:8px;color:#a3a7ae;line-height:9px">Group</div>
<div class="btn g1s" style="left:585px;top:405px;width:31px;height:29px;font-size:10px;">1</div>
<div class="btn g2" style="left:626px;top:405px;width:31px;height:29px;font-size:10px;">2</div>
</body></html>
